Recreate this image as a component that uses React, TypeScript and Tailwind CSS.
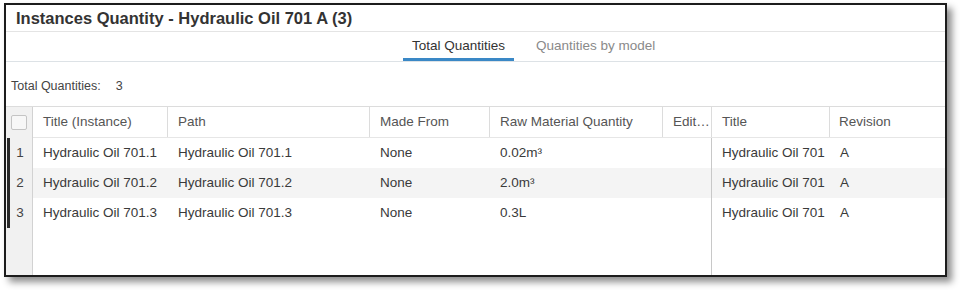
import React from 'react';

const rows = [
  { n: 1, title: 'Hydraulic Oil 701.1', path: 'Hydraulic Oil 701.1', from: 'None', qty: '0.02m³', model: 'Hydraulic Oil 701', rev: 'A' },
  { n: 2, title: 'Hydraulic Oil 701.2', path: 'Hydraulic Oil 701.2', from: 'None', qty: '2.0m³', model: 'Hydraulic Oil 701', rev: 'A' },
  { n: 3, title: 'Hydraulic Oil 701.3', path: 'Hydraulic Oil 701.3', from: 'None', qty: '0.3L', model: 'Hydraulic Oil 701', rev: 'A' },
];

const head = 'flex items-center h-full border-r border-[#dcdcdc] pl-[10px] truncate';
const cell = 'flex items-center h-full pl-[10px] truncate';

export default function App() {
  return (
    <div className="w-[960px] h-[290px] bg-white pl-[4px] pt-[3px] font-['Liberation_Sans',Arial,sans-serif] text-[13.5px] text-[#3a3a3a]">
      <div className="w-[943px] h-[274px] border-2 border-[#1c1c1c] bg-white shadow-[5px_5px_7px_rgba(0,0,0,0.45)] flex flex-col overflow-hidden">
        <div className="h-[27px] shrink-0 border-b border-[#e4e4e4] pl-[10px] flex items-center text-[16.5px] font-bold text-[#333]">
          Instances Quantity - Hydraulic Oil 701 A (3)
        </div>
        <div className="h-[30px] shrink-0 border-b border-[#dde2e6] flex pl-[397px]">
          <div className="px-[9px] flex items-center border-b-[3px] border-[#3a88c6] pt-[3px] text-[#333]">Total Quantities</div>
          <div className="ml-[12px] px-[10px] flex items-center text-[#8a8a8a]">Quantities by model</div>
        </div>
        <div className="h-[44px] shrink-0 flex items-center pl-[5px] pt-[5px] text-[12.5px] text-[#444]">
          Total Quantities:<span className="ml-[15px]">3</span>
        </div>
        <div className="flex-1 flex border-t border-[#dcdcdc]">
          <div className="w-[27px] shrink-0 bg-[#f1f1f1] border-r border-[#d2d2d2] flex flex-col">
            <div className="h-[31px] flex items-center pl-[5px]">
              <div className="w-[16px] h-[15px] rounded-[2px] border border-[#c4c4c4] bg-[#f7f7f7]" />
            </div>
            {rows.map((r) => (
              <div key={r.n} className="h-[30px] flex items-center">
                <div className="ml-[1px] w-[3px] h-full bg-[#2a2a2a]" />
                <div className="flex-1 text-center pr-[2px] text-[#444]">{r.n}</div>
              </div>
            ))}
          </div>
          <div className="flex-1 flex flex-col">
            <div className="h-[31px] grid grid-cols-[135px_202px_120px_173px_49px_118px_1fr] border-b border-[#e6e6e6] text-[#555]">
              <div className={head}>Title (Instance)</div>
              <div className={head}>Path</div>
              <div className={head}>Made From</div>
              <div className={`${head} pl-[8px]`}>Raw Material Quantity</div>
              <div className={`${head} border-[#c8c8c8]`}>Edit…</div>
              <div className={head}>Title</div>
              <div className="flex items-center h-full pl-[9px]">Revision</div>
            </div>
            <div className="flex-1 grid grid-cols-[679px_1fr]">
              <div className="border-r border-[#c8c8c8] flex flex-col">
                {rows.map((r) => (
                  <div key={r.n} className={`h-[30px] grid grid-cols-[135px_202px_120px_173px_1fr] ${r.n === 2 ? 'bg-[#f4f4f4]' : ''}`}>
                    <div className={cell}>{r.title}</div>
                    <div className={cell}>{r.path}</div>
                    <div className={cell}>{r.from}</div>
                    <div className={`${cell} pl-[8px]`}>{r.qty}</div>
                    <div />
                  </div>
                ))}
              </div>
              <div className="flex flex-col">
                {rows.map((r) => (
                  <div key={r.n} className={`h-[30px] grid grid-cols-[118px_1fr] ${r.n === 2 ? 'bg-[#f4f4f4]' : ''}`}>
                    <div className={cell}>{r.model}</div>
                    <div className={`${cell} pl-[9px]`}>{r.rev}</div>
                  </div>
                ))}
              </div>
            </div>
          </div>
        </div>
      </div>
    </div>
  );
}
